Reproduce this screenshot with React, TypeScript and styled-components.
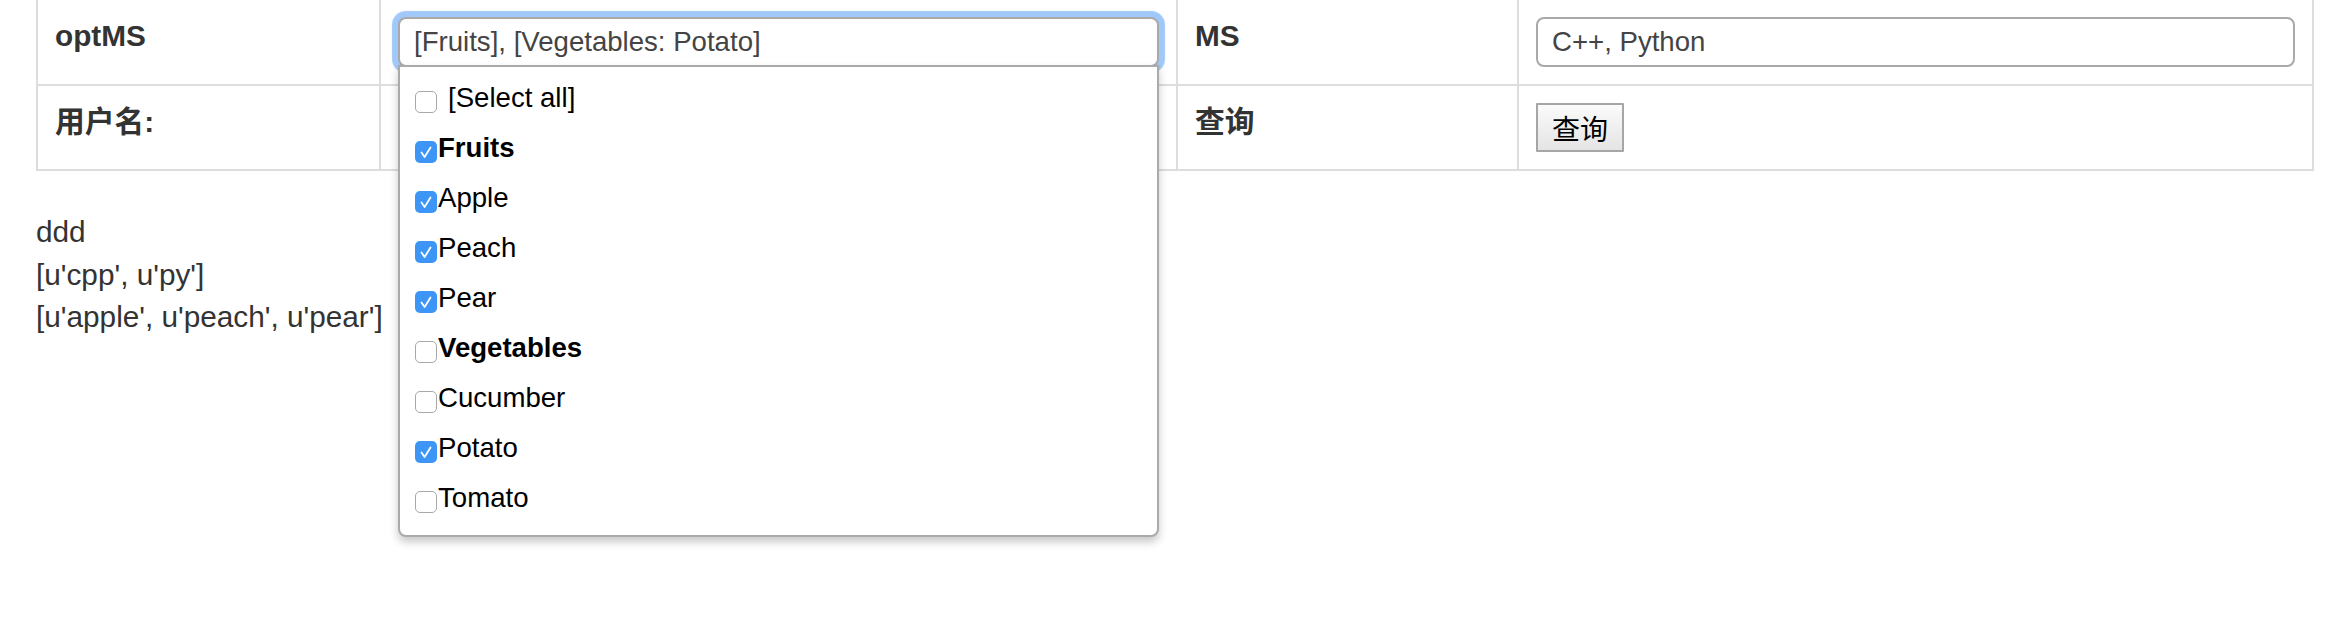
import styled, { createGlobalStyle } from "styled-components";

const GlobalStyle = createGlobalStyle`
  html, body {
    margin: 0;
    padding: 0;
    background: #fff;
  }
  body {
    font-family: "Liberation Sans", Arial, "Noto Sans CJK SC", sans-serif;
    font-size: 29.75px;
    line-height: 42.5px;
    color: #333;
  }
`;

type OptionType = {
    label: string,
    checked: boolean,
    group?: boolean,
    all?: boolean,
}

const options: OptionType[] = [
    {label: "[Select all]", checked: false, all: true},
    {label: "Fruits", checked: true, group: true},
    {label: "Apple", checked: true},
    {label: "Peach", checked: true},
    {label: "Pear", checked: true},
    {label: "Vegetables", checked: false, group: true},
    {label: "Cucumber", checked: false},
    {label: "Potato", checked: true},
    {label: "Tomato", checked: false},
];

const CheckBox = ({checked}: { checked: boolean }) => (
    <StyledCheck $checked={checked}>
        {checked && (
            <svg width="22" height="22" viewBox="0 0 22 22">
                <path d="M6.5 11.5 L9.6 16 L15.5 6.5" fill="none" stroke="#fff" strokeWidth="1.8"
                      strokeLinecap="round" strokeLinejoin="round"/>
            </svg>
        )}
    </StyledCheck>
);

const MultiSelect = () => {
    return (
        <SelectWrap>
            <Choice>[Fruits], [Vegetables: Potato]</Choice>
            <Drop>
                {options.map((o) => (
                    <Item key={o.label} $group={o.group} $all={o.all}>
                        <CheckBox checked={o.checked}/>
                        <span>{o.label}</span>
                    </Item>
                ))}
            </Drop>
        </SelectWrap>
    );
};

export default function App() {
    return (
        <>
            <GlobalStyle/>
            <Page>
                <Table>
                    <colgroup>
                        <col style={{width: 343}}/>
                        <col style={{width: 797}}/>
                        <col style={{width: 341}}/>
                        <col/>
                    </colgroup>
                    <tbody>
                    <tr>
                        <Cell $label>optMS</Cell>
                        <Cell><MultiSelect/></Cell>
                        <Cell $label>MS</Cell>
                        <Cell><TextBox>C++, Python</TextBox></Cell>
                    </tr>
                    <tr>
                        <Cell $label>用户名:</Cell>
                        <Cell/>
                        <Cell $label>查询</Cell>
                        <Cell><Button>查询</Button></Cell>
                    </tr>
                    </tbody>
                </Table>
                <Output>
                    <div>ddd</div>
                    <div>[u'cpp', u'py']</div>
                    <div>[u'apple', u'peach', u'pear']</div>
                </Output>
            </Page>
        </>
    );
}

const Page = styled.div`
    min-height: 618px;
    padding: 0 14px 0 36px;
`

const Table = styled.table`
    width: 100%;
    table-layout: fixed;
    border-collapse: collapse;
    margin: -2px 0 40px;
`

const Cell = styled.td<{ $label?: boolean }>`
    border: 2px solid #ddd;
    padding: ${p => p.$label ? "15px 17px 19px" : "17px"};
    vertical-align: top;
    font-weight: ${p => p.$label ? 700 : 400};
`

const SelectWrap = styled.div`
    position: relative;
`

const inputBox = `
    box-sizing: border-box;
    height: 50px;
    width: 100%;
    border: 2px solid #a9a9a9;
    border-radius: 8px;
    padding: 0 14px;
    font-size: 27.6px;
    line-height: 46px;
    color: #444;
    background: #fff;
    white-space: nowrap;
`

const Choice = styled.div`
    ${inputBox};
    box-shadow: 0 0 1px 6px rgba(128, 182, 245, 0.75);
`

const TextBox = styled.div`
    ${inputBox};
`

const Drop = styled.ul`
    position: absolute;
    top: 48px;
    left: 0;
    right: 0;
    z-index: 2;
    margin: 0;
    padding: 6px 0 12px;
    list-style: none;
    background: #fff;
    border: 2px solid #aaa;
    border-radius: 0 0 8px 8px;
    box-shadow: 0 5px 9px rgba(0, 0, 0, 0.22);
`

const Item = styled.li<{ $group?: boolean, $all?: boolean }>`
    display: flex;
    align-items: center;
    gap: ${p => p.$all ? "11px" : "1px"};
    height: 50px;
    padding-left: 15px;
    font-size: 27.6px;
    line-height: 50px;
    color: #000;
    font-weight: ${p => p.$group ? 700 : 400};
`

const StyledCheck = styled.span<{ $checked: boolean }>`
    box-sizing: border-box;
    display: block;
    flex: none;
    width: 22px;
    height: 22px;
    margin-top: 7px;
    border-radius: 5px;
    border: ${p => p.$checked ? "none" : "1.5px solid #a8a8a8"};
    background: ${p => p.$checked ? "#3d95f5" : "#fff"};

    svg {
        display: block;
    }
`

const Button = styled.button`
    box-sizing: border-box;
    display: block;
    width: 88px;
    height: 49px;
    padding: 0;
    border: 2px solid #a6a6a6;
    border-radius: 1px;
    background: linear-gradient(#fbfbfb, #e4e4e4);
    font-family: "Noto Sans CJK SC", sans-serif;
    font-size: 28px;
    color: #000;
`

const Output = styled.div`
    color: #333;
`
